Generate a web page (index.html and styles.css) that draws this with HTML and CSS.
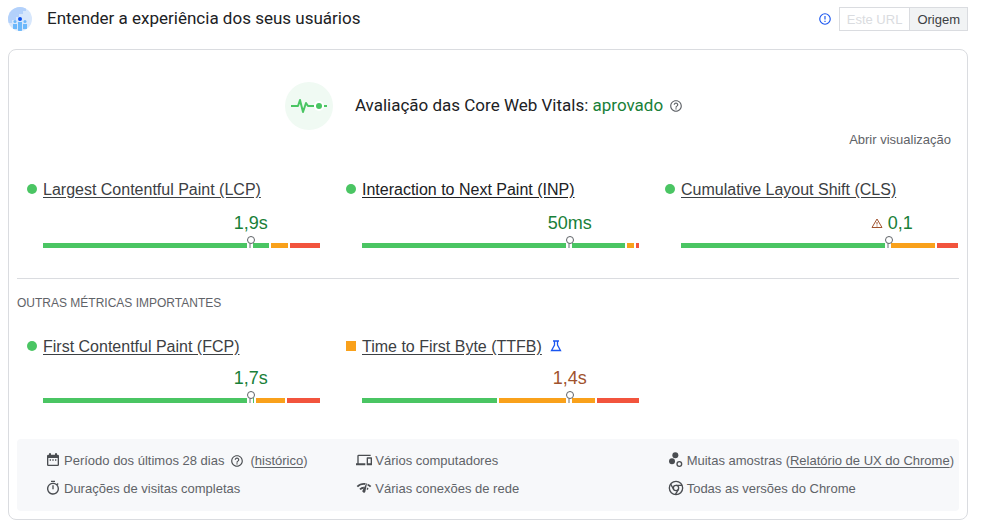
FILE: index.html
```html
<!DOCTYPE html>
<html lang="pt-BR">
  <head>
    <meta charset="UTF-8" />
    <meta name="viewport" content="width=device-width, initial-scale=1.0" />
    <title>Entender a experiência dos seus usuários</title>
    <link rel="stylesheet" href="styles.css">
  </head>
  <body>
    <!-- shared icon -->
    <svg class="sprite" aria-hidden="true">
      <symbol id="help" viewBox="0 0 24 24">
        <path d="M11 18h2v-2h-2v2zm1-16C6.48 2 2 6.480 2 12s4.480 10 10 10 10-4.480 10-10S17.520 2 12 2zm0 18c-4.410 0-8-3.590-8-8s3.590-8 8-8 8 3.590 8 8-3.590 8-8 8zm0-14c-2.210 0-4 1.790-4 4h2c0-1.100.9-2 2-2s2 .9 2 2c0 2-3 1.750-3 5h2c0-2.250 3-2.500 3-5 0-2.210-1.790-4-4-4z" />
      </symbol>
    </svg>

    <header class="header">
      <svg class="logo" viewBox="0 0 24 24">
        <clipPath id="round"><circle cx="12" cy="12" r="12" /></clipPath>
        <g clip-path="url(#round)">
          <rect width="24" height="24" fill="#d7e7fc" />
          <path d="M0 0h18v4h-3v3h-4v3H8v3H4v3H0z" fill="#b3d1fb" />
          <circle cx="7" cy="14.500" r="1.500" fill="#6cb8fb" />
          <circle cx="17" cy="14.500" r="1.500" fill="#6cb8fb" />
          <path d="M5 17h4v5H5zM15 17h4v5h-4zM10 15h4v9h-4z" fill="#6cb8fb" />
          <circle cx="12" cy="12" r="2" fill="#0b50ee" />
        </g>
      </svg>
      <h1>Entender a experiência dos seus usuários</h1>
      <svg class="info" viewBox="0 0 24 24">
        <path d="M11 15h2v2h-2zm0-8h2v6h-2zm1-5a10 10 0 1 0 0 20 10 10 0 0 0 0-20zm0 18a8 8 0 1 1 0-16 8 8 0 0 1 0 16z" />
      </svg>
      <div class="toggle">
        <button type="button" disabled>Este URL</button>
        <button type="button" class="active">Origem</button>
      </div>
    </header>

    <main class="card">
      <section class="assessment">
        <svg class="pulse" viewBox="0 0 48 48">
          <circle cx="24" cy="24" r="24" fill="#f0faf3" />
          <path d="M6 24h7l2-6 3 12 3-9 2 3h6M39 24h3" fill="none" stroke="#4ac563" stroke-width="2" stroke-linejoin="round" />
          <circle cx="34" cy="24" r="5" fill="#fff" />
          <circle cx="34" cy="24" r="3" fill="#4ac563" />
        </svg>
        <h2>Avaliação das Core Web Vitals: <span class="passed">aprovado</span></h2>
        <svg class="help"><use href="#help" /></svg>
      </section>
      <button type="button" class="expand">Abrir visualização</button>

      <section class="metrics vitals">
        <div class="metric">
          <span class="dot"></span>
          <a href="#lcp">Largest Contentful Paint (LCP)</a>
          <div class="value">1,9s</div>
          <div class="bar">
            <div class="good" style="flex-grow: 226"></div>
            <div class="average" style="flex-grow: 17"></div>
            <div class="poor" style="flex-grow: 30"></div>
            <span class="marker"></span>
          </div>
        </div>
        <div class="metric">
          <span class="dot"></span>
          <a href="#inp" class="focused">Interaction to Next Paint (INP)</a>
          <div class="value">50ms</div>
          <div class="bar">
            <div class="good" style="flex-grow: 263"></div>
            <div class="average" style="flex-grow: 7"></div>
            <div class="poor" style="flex-grow: 3"></div>
            <span class="marker"></span>
          </div>
        </div>
        <div class="metric">
          <span class="dot"></span>
          <a href="#cls">Cumulative Layout Shift (CLS)</a>
          <div class="value flagged">
            <svg class="warning" viewBox="0 0 24 24">
              <path d="M12 4L2 21h20zM12 10v5M12 17v2" fill="none" stroke="#a0522d" stroke-width="2" />
            </svg>
            0,1
          </div>
          <div class="bar">
            <div class="good" style="flex-grow: 207"></div>
            <div class="average" style="flex-grow: 45"></div>
            <div class="poor" style="flex-grow: 21"></div>
            <span class="marker"></span>
          </div>
        </div>
      </section>

      <h3>OUTRAS MÉTRICAS IMPORTANTES</h3>

      <section class="metrics">
        <div class="metric">
          <span class="dot"></span>
          <a href="#fcp">First Contentful Paint (FCP)</a>
          <div class="value">1,7s</div>
          <div class="bar">
            <div class="good" style="flex-grow: 211"></div>
            <div class="average" style="flex-grow: 29"></div>
            <div class="poor" style="flex-grow: 33"></div>
            <span class="marker"></span>
          </div>
        </div>
        <div class="metric">
          <span class="dot square"></span>
          <div class="name">
            <a href="#ttfb">Time to First Byte (TTFB)</a>
            <svg class="flask" viewBox="0 0 12 12">
              <path d="M3 1h6M4.500 1v4L1.500 10.500h9L7.500 5V1" fill="none" stroke="#1a56f0" stroke-width="1.300" />
            </svg>
          </div>
          <div class="value orange">1,4s</div>
          <div class="bar">
            <div class="good" style="flex-grow: 135"></div>
            <div class="average" style="flex-grow: 96"></div>
            <div class="poor" style="flex-grow: 42"></div>
            <span class="marker"></span>
          </div>
        </div>
      </section>

      <footer class="details">
        <div class="item">
          <svg viewBox="0 0 24 24"><path d="M19 4h-1V2h-3v2H9V2H6v2H5a2 2 0 0 0-2 2v13a2 2 0 0 0 2 2h14a2 2 0 0 0 2-2V6a2 2 0 0 0-2-2zm0 15H5V9h14zM7 11h2v2H7zm4 0h2v2h-2zm4 0h2v2h-2z" /></svg>
          <span>Período dos últimos 28 dias</span>
          <svg class="help"><use href="#help" /></svg>
          <span>(<a href="#historico">histórico</a>)</span>
        </div>
        <div class="item">
          <svg viewBox="0 0 24 24"><path d="M4 6h18V4H4a2 2 0 0 0-2 2v11H0v3h14v-3H4zm19 2h-6a1 1 0 0 0-1 1v10a1 1 0 0 0 1 1h6a1 1 0 0 0 1-1V9a1 1 0 0 0-1-1zm-1 9h-4v-7h4z" /></svg>
          <span>Vários computadores</span>
        </div>
        <div class="item">
          <svg viewBox="0 0 24 24"><circle cx="11" cy="5" r="4.500" /><circle cx="6" cy="14" r="4.500" /><circle cx="17" cy="18" r="3.500" class="line" /></svg>
          <span>Muitas amostras (<a href="#crux">Relatório de UX do Chrome</a>)</span>
        </div>
        <div class="item">
          <svg viewBox="0 0 24 24"><path d="M15 1H9v2h6zm-4 13h2V8h-2zm8-6.600 1.400-1.400L19 4.600 17.600 6A9 9 0 1 0 19 7.400zM12 20a7 7 0 1 1 0-14 7 7 0 0 1 0 14z" /></svg>
          <span>Durações de visitas completas</span>
        </div>
        <div class="item">
          <svg viewBox="0 0 24 24"><path d="M15.900 5c-.2 0-.3.100-.4.200l-5.600 10.300a2.300 2.300 0 1 0 4.200 1.700L16.400 5.500c0-.3-.2-.5-.5-.5zM1 9l2 2c2.900-2.900 6.800-4.100 10.500-3.600l1.200-2.700C9.900 3.800 4.700 5.300 1 9zm20 2 2-2a15 15 0 0 0-5.400-3.400l-.5 2.800c1.400.6 2.700 1.500 3.900 2.600zm-4 4 2-2a10 10 0 0 0-2.500-1.700l-.5 2.900c.3.200.7.500 1 .8zM5 13l2 2a7 7 0 0 1 4-2l1.300-2.800A10 10 0 0 0 5 13z" /></svg>
          <span>Várias conexões de rede</span>
        </div>
        <div class="item">
          <svg viewBox="0 0 24 24"><g class="line"><circle cx="12" cy="12" r="10" /><circle cx="12" cy="12" r="4" /><path d="M12 8h9M8.500 14L4 6.300M15.500 14L11 22" /></g></svg>
          <span>Todas as versões do Chrome</span>
        </div>
      </footer>
    </main>
  </body>
</html>
```
FILE: styles.css
```css
* {
  box-sizing: border-box;
}

body {
  margin: 0;
  padding: 7px 15px 8px 8px;
  background: #fff;
  color: #3c4043;
  font-family: "Liberation Sans", Arial, sans-serif;
}

h1,
h2,
h3 {
  margin: 0;
}

a {
  color: inherit;
  text-underline-offset: 2px;
}

.sprite {
  display: none;
}

.header {
  display: flex;
  align-items: center;
  height: 24px;
}

h1,
h2 {
  padding-bottom: 2px;
  color: #202124;
  font-family: Roboto, sans-serif;
  font-size: 17px;
  font-weight: 400;
  line-height: 22px;
}

.logo {
  width: 24px;
  height: 24px;
  margin-right: 15px;
}

.info {
  width: 14px;
  height: 14px;
  margin: 0 7px 0 auto;
  fill: #1a56f0;
}

.toggle {
  display: flex;
}

.toggle button {
  height: 24px;
  padding: 0 7px;
  border: 1px solid #dadce0;
  background: #fff;
  color: #3c4043;
  font-family: inherit;
  font-size: 13px;
}

.toggle button:disabled {
  color: #dadce0;
}

.toggle .active {
  margin-left: -1px;
  background: #f1f3f4;
}

.card {
  margin-top: 18px;
  padding: 32px 8px 8px;
  border: 1px solid #dadce0;
  border-radius: 8px;
}

.assessment {
  display: flex;
  align-items: center;
  justify-content: center;
  padding-right: 8px;
}

.pulse {
  width: 48px;
  height: 48px;
  margin-right: 22px;
}

.passed {
  color: #188038;
}

.help {
  width: 14px;
  height: 14px;
  fill: #5f6368;
}

.assessment .help {
  margin-left: 6px;
}

.expand {
  display: block;
  margin: 2px 8px 0 auto;
  padding: 0;
  border: 0;
  background: none;
  color: #5f6368;
  font-family: inherit;
  font-size: 13px;
  line-height: 16px;
}

.metrics {
  display: grid;
  grid-template-columns: repeat(3, 1fr);
  column-gap: 26px;
  padding: 21px 1px 36px 10px;
}

.vitals {
  padding: 30px 1px 30px 10px;
  border-bottom: 1px solid #dadce0;
}

.metric {
  display: grid;
  grid-template-columns: 10px 1fr;
  column-gap: 6px;
  align-items: center;
  font-size: 16px;
  line-height: 24px;
  white-space: nowrap;
}

.metric .focused {
  color: #202124;
}

.dot {
  width: 10px;
  height: 10px;
  margin-bottom: 2px;
  border-radius: 50%;
  background: #4ac563;
}

.square {
  border-radius: 0;
  background: #f9a11b;
}

.flask {
  width: 12px;
  height: 12px;
  margin-left: 4px;
}

/* centred over the 75th percentile marker */
.value {
  grid-column: 2;
  width: 50%;
  margin: 7px 0 8px 50%;
  color: #188038;
  font-size: 18px;
  text-align: center;
}

.vitals .value {
  margin-top: 8px;
  margin-bottom: 7px;
  line-height: 26px;
}

.value.flagged {
  padding-left: 6px;
}

.orange {
  color: #a0522d;
}

.warning {
  width: 12px;
  height: 12px;
}

.bar {
  position: relative;
  grid-column: 2;
  display: flex;
  gap: 2px;
  height: 5px;
}

.good {
  background: #4ac563;
}

.average {
  background: #f9a11b;
}

.poor {
  background: #f2543d;
}

.marker {
  position: absolute;
  bottom: 0;
  left: 75%;
  width: 6px;
  height: 8px;
  margin-left: -4px;
  border: solid #fff;
  border-width: 0 2px;
  background: #b4b7ba;
}

.marker::before {
  content: "";
  position: absolute;
  top: -4px;
  left: -2px;
  width: 6px;
  height: 6px;
  border: 1px solid #5f6368;
  border-radius: 50%;
  background: #fff;
}

h3 {
  padding-top: 14px;
  padding-bottom: 1px;
  color: #5f6368;
  font-size: 12px;
  font-weight: 400;
  line-height: 20px;
}

.details {
  display: grid;
  grid-template-columns: repeat(3, 1fr);
  padding: 8px 4px;
  border-radius: 4px;
  background: #f7f8fa;
  color: #5f6368;
  font-size: 13px;
  line-height: 28px;
}

.item {
  display: flex;
  align-items: center;
  padding-left: 24px;
  white-space: nowrap;
}

.item svg {
  flex: none;
  width: 16px;
  height: 16px;
  margin: 0 3px 3px 0;
  fill: #4a4d51;
}

.item .line {
  fill: none;
  stroke: #4a4d51;
  stroke-width: 2;
}

.item .help {
  width: 14px;
  height: 14px;
  margin: 0 6px;
}
```
